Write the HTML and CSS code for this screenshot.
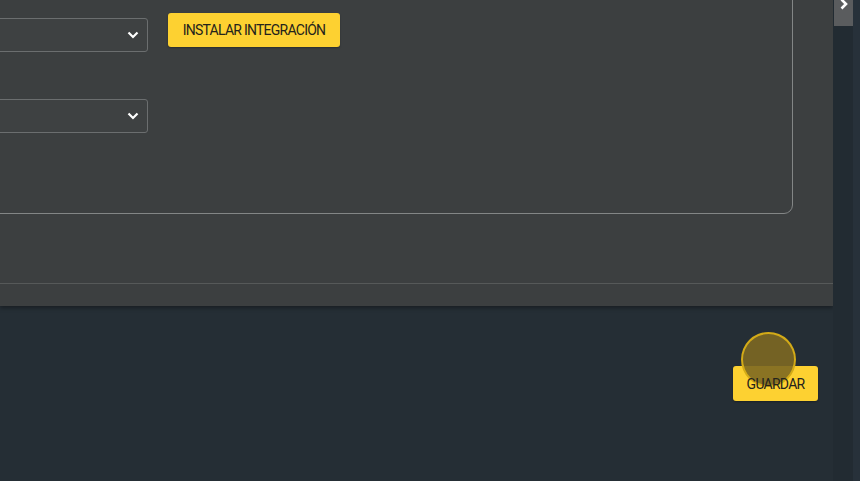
FILE: index.html
```html
<!DOCTYPE html>
<html lang="es">
<head>
<meta charset="utf-8">
<link rel="stylesheet" href="styles.css">
</head>
<body>
<div class="page">
  <div class="main">
    <div class="panel">
      <div class="body">
        <div class="fieldset">
          <div class="row">
            <div class="select">
              <svg class="chev" width="12" height="8" viewBox="0 0 12 8"><path d="M1.5 1.5 L6 6 L10.5 1.5" fill="none" stroke="#fff" stroke-width="2.2"/></svg>
            </div>
            <button class="btn btn-install"><span class="label">INSTALAR INTEGRACIÓN</span></button>
          </div>
          <div class="row row2">
            <div class="select">
              <svg class="chev" width="12" height="8" viewBox="0 0 12 8"><path d="M1.5 1.5 L6 6 L10.5 1.5" fill="none" stroke="#fff" stroke-width="2.2"/></svg>
            </div>
          </div>
        </div>
      </div>
      <div class="footer"></div>
    </div>
    <div class="actions">
      <button class="btn btn-save"><span class="ripple"></span><span class="label">GUARDAR</span></button>
    </div>
  </div>
  <div class="side">
    <div class="tab">
      <svg width="10" height="12" viewBox="0 0 10 12"><path d="M2.5 0.5 L7 5 L2.5 9.5" fill="none" stroke="#fff" stroke-width="2.6"/></svg>
    </div>
  </div>
</div>
</body>
</html>
```
FILE: styles.css
```css
* { box-sizing: border-box; }
html, body { margin: 0; padding: 0; }
body {
  background: #252e35;
  font-family: Roboto, "Liberation Sans", sans-serif;
  width: 860px;
  height: 481px;
  overflow: hidden;
}
.page {
  display: flex;
  height: 481px;
}
.main {
  width: 833px;
  display: flex;
  flex-direction: column;
}
.panel {
  height: 306px;
  background: #3c3f40;
  display: flex;
  flex-direction: column;
  box-shadow: 0 2px 4px rgba(0,0,0,0.35);
  overflow: hidden;
}
.body {
  height: 284px;
  border-bottom: 1px solid #565959;
  padding-right: 40px;
}
.fieldset {
  height: 234px;
  margin-top: -20px;
  margin-left: -40px;
  border: 1px solid #838686;
  border-radius: 0 0 9px 0;
  padding-top: 32px;
}
.row {
  display: flex;
  align-items: flex-start;
  gap: 20px;
}
.row2 { margin-top: 42px; }
.select {
  width: 187px;
  height: 34px;
  border: 1px solid #6b6e6f;
  border-radius: 3px;
  background: #3e4142;
  display: flex;
  align-items: center;
  justify-content: flex-end;
  padding-right: 8px;
  margin-top: 5px;
}
.chev { display: block; }
.btn {
  height: 34px;
  border: none;
  border-radius: 3px;
  background: #fdd131;
  color: #24231c;
  font-family: Roboto, "Liberation Sans", sans-serif;
  font-weight: 400;
  font-size: 14px;
  letter-spacing: -0.75px;
  padding: 0 14px;
  box-shadow: 0 1px 2px rgba(0,0,0,0.3);
  position: relative;
}
.btn-install { width: 172px; padding: 0; }
.label { position: relative; }
.footer { flex: 1; }
.actions {
  display: flex;
  justify-content: flex-end;
  padding-top: 60px;
  padding-right: 15px;
}
.btn-save {
  height: 35px;
  width: 85px;
  padding: 0;
}
.ripple {
  position: absolute;
  left: 8px;
  top: -34px;
  width: 55px;
  height: 55px;
  border-radius: 50%;
  background: rgba(125, 104, 34, 0.9);
  border: 2px solid rgba(222, 178, 22, 0.9);
}
.side {
  width: 27px;
  background: #222b32;
  border-right: 7px solid #27313a;
}
.tab {
  margin-left: 1px;
  width: 19px;
  height: 26px;
  background: #5a5c5e;
  display: flex;
  justify-content: center;
}
.tab svg { margin-top: -1px; }
```
